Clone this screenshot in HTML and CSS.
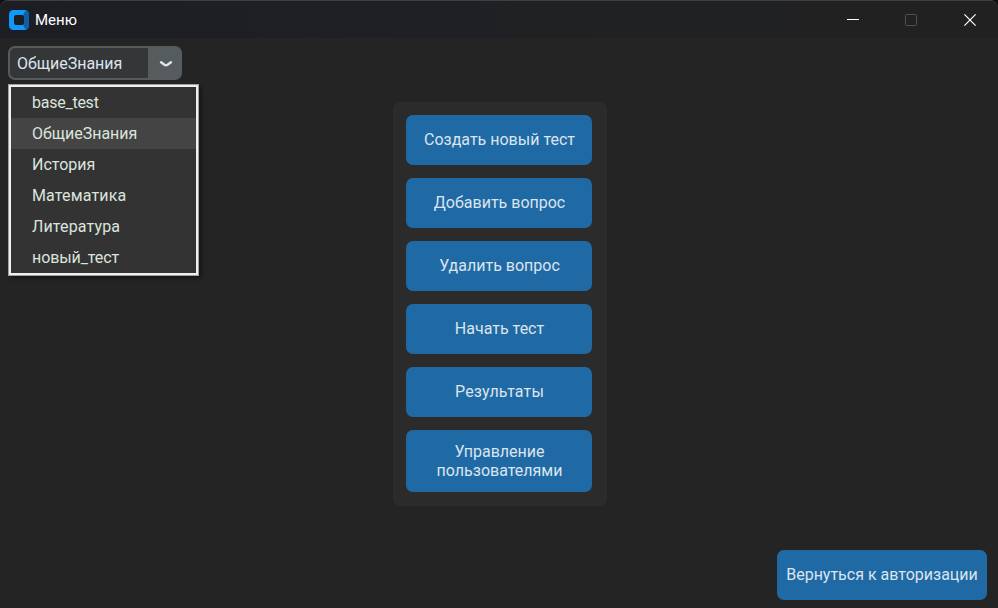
FILE: index.html
```html
<!DOCTYPE html>
<html lang="ru">
<head>
<meta charset="utf-8">
<title>Меню</title>
<link rel="stylesheet" href="styles.css">
</head>
<body>
<div class="window">
  <header class="titlebar">
    <svg class="logo" width="20" height="20" viewBox="0 0 20 20">
      <rect width="20" height="20" rx="4.500" fill="#1198fb"/>
      <path d="M17 .3A4.500 4.500 0 0 1 20 4.500v11a4.500 4.500 0 0 1-3 4.200L14.500 16V4z" fill="#0c5fa8"/>
      <rect x="5" y="5" width="10" height="10" rx="2" fill="#1c1e22"/>
    </svg>
    <h1 class="title">Меню</h1>
    <div class="controls">
      <svg width="12" height="12" viewBox="0 0 12 12"><path d="M0 5.500h12" stroke="#fff"/></svg>
      <svg width="12" height="12" viewBox="0 0 12 12"><rect x=".5" y=".5" width="11" height="11" rx="1" fill="none" stroke="#505052"/></svg>
      <svg width="12" height="12" viewBox="0 0 12 12"><path d="M.4.400l11.200 11.200M11.600.4L.4 11.600" stroke="#fff" stroke-width="1.200"/></svg>
    </div>
  </header>
  <main class="content">
    <div class="select">
      <span class="value">ОбщиеЗнания</span>
      <span class="arrow"><svg width="14" height="8" viewBox="0 0 14 8"><path d="M2 2.300L5.500 4.800Q7 5.800 8.500 4.800L12 2.300" fill="none" stroke="#dce4ee" stroke-width="2.400" stroke-linecap="round" stroke-linejoin="round"/></svg></span>
      <ul class="options">
        <li class="latin">base_test</li>
        <li class="active">ОбщиеЗнания</li>
        <li>История</li>
        <li class="wide">Математика</li>
        <li class="wide">Литература</li>
        <li class="narrow">новый_тест</li>
      </ul>
    </div>
    <nav class="panel">
      <button>Создать новый тест</button>
      <button>Добавить вопрос</button>
      <button>Удалить вопрос</button>
      <button>Начать тест</button>
      <button class="wide">Результаты</button>
      <button class="tall">Управление<br>пользователями</button>
    </nav>
    <button class="back">Вернуться к авторизации</button>
  </main>
</div>
</body>
</html>
```
FILE: styles.css
```css
* { box-sizing: border-box; }
body {
  margin: 0;
  background: #101011;
  color: #dce4ee;
  font: 16px/19px Roboto, sans-serif;
}
.window {
  width: 998px;
  height: 608px;
  display: flex;
  flex-direction: column;
  overflow: hidden;
  background: #242424;
  border-top: 1px solid #3d3f41;
  border-radius: 8px 8px 0 0;
}
.titlebar {
  flex: 0 0 37px;
  display: flex;
  align-items: center;
  padding: 0 22px 0 9px;
  background: linear-gradient(90deg, #1c1e24, #202123 60%, #212121);
}
.logo { display: block; }
.title {
  margin: 0 0 0 6px;
  color: #fff;
  font: 400 15px/20px Roboto, sans-serif;
}
.controls { display: flex; gap: 46px; margin-left: auto; }
.controls svg { display: block; }
.controls svg:last-child { margin-left: 1px; }
.content {
  flex: 1;
  display: flex;
  flex-direction: column;
  align-items: center;
  padding: 8px 11px 8px 8px;
}
.select {
  position: relative;
  align-self: flex-start;
  display: flex;
  width: 174px;
  height: 34px;
  border: 2px solid #565b5e;
  border-radius: 7px;
  background: #343638;
}
.value { flex: 1; padding: 6px 0 0 7px; }
.arrow {
  display: flex;
  align-items: center;
  justify-content: center;
  width: 32px;
  padding: 2px 0 0 4px;
  background: #565b5e;
}
.options {
  position: absolute;
  top: 36px;
  left: -2px;
  width: 191px;
  margin: 0;
  padding: 2px;
  list-style: none;
  background: #333;
  border: 1px solid #a0a0a0;
  box-shadow: inset 0 0 0 2px #f0f0f0, 3px 3px 3px rgba(0, 0, 0, .35);
}
.options li { height: 31px; padding: 6px 0 0 21px; color: #dce4de; }
.options .active { background: #444; }
.options .latin { letter-spacing: -.25px; }
.options .narrow { letter-spacing: -.1px; }
.wide { letter-spacing: .15px; }
.panel {
  display: flex;
  flex-direction: column;
  gap: 13px;
  width: 214px;
  height: 404px;
  margin: 22px 0 0 5px;
  padding: 13px 15px 13px 13px;
  border-radius: 7px;
  background: #2b2b2b;
}
button {
  flex: none;
  height: 50px;
  padding: 0 0 1px 1px;
  border: 0;
  border-radius: 7px;
  background: #1f6aa5;
  color: inherit;
  font: inherit;
}
.tall { height: 62px; }
.back { align-self: flex-end; width: 210px; margin-top: auto; padding-left: 0; }
```
